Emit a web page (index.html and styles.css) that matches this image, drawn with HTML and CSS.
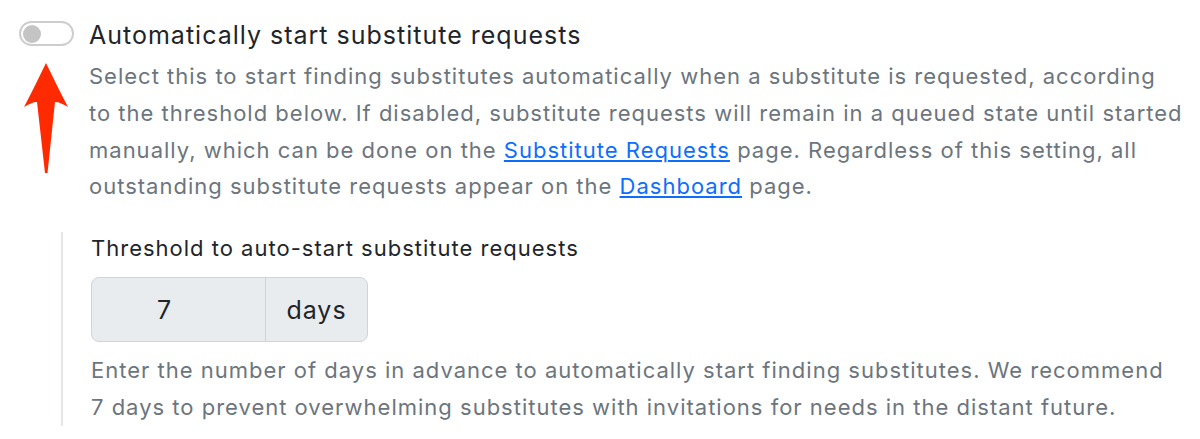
FILE: index.html
```html
<!DOCTYPE html>
<html lang="en">
<head>
<meta charset="utf-8">
<title>Substitute settings</title>
<link rel="stylesheet" href="styles.css">
</head>
<body>
<div class="page">
  <div class="setting">
    <div class="switch-col">
      <span class="switch"><span class="knob"></span></span>
      <svg class="arrow" width="89" height="130" viewBox="0 0 89 130" aria-hidden="true">
        <path d="M46 8 C53 22 60 37 68 52 C63 49 59 47 55 47 L47.5 118 L45 118 L37 47 C33 47 29 49 24 52 C32 37 39 22 46 8 Z" fill="#ff2a00"/>
      </svg>
    </div>
    <div class="content">
      <div class="title">Automatically start substitute requests</div>
      <p class="desc">Select this to start finding substitutes automatically when a substitute is requested, according to the threshold below. If disabled, substitute requests will remain in a queued state until started manually, which can be done on the <a href="#">Substitute Requests</a> page. Regardless of this setting, all outstanding substitute requests appear on the <a href="#">Dashboard</a> page.</p>
    </div>
  </div>
  <div class="sub">
    <div class="label">Threshold to auto-start substitute requests</div>
    <div class="input-group">
      <div class="input">7</div>
      <div class="addon">days</div>
    </div>
    <p class="help">Enter the number of days in advance to automatically start finding substitutes. We recommend 7 days to prevent overwhelming substitutes with invitations for needs in the distant future.</p>
  </div>
</div>
</body>
</html>
```
FILE: styles.css
```css
html, body {
  margin: 0;
  padding: 0;
  background: #ffffff;
}
body {
  font-family: Inter, "Noto Sans", "Liberation Sans", sans-serif;
  color: #212529;
}
.page {
  width: 1200px;
}
.setting {
  display: flex;
}
.switch-col {
  width: 89px;
  flex: none;
  display: flex;
  flex-direction: column;
}
.switch {
  margin: 21px 0 0 19px;
  width: 55px;
  height: 25px;
  box-sizing: border-box;
  border: 2px solid #cdcdcd;
  border-radius: 13px;
  background: #fff;
  display: flex;
  align-items: center;
  padding-left: 2px;
}
.knob {
  width: 18px;
  height: 18px;
  border-radius: 50%;
  background: #c4c4c4;
}
.arrow {
  display: block;
  margin-top: 9px;
}
.content {
  padding-top: 17px;
  flex: 1;
  min-width: 0;
}
.title {
  font-size: 25px;
  letter-spacing: 1px;
  line-height: 36px;
  color: #212529;
}
.desc {
  margin: 5px 0 0;
  font-size: 22px;
  letter-spacing: 1px;
  line-height: 36.75px;
  color: #6c757d;
  width: 1094px;
}
.desc a {
  color: #0d6efd;
  text-decoration: underline;
}
.sub {
  margin: 27px 0 0 61px;
  border-left: 2px solid #e4e6e9;
  padding-left: 28px;
  height: 194px;
}
.label {
  font-size: 22px;
  letter-spacing: 1px;
  line-height: 32px;
  color: #212529;
}
.input-group {
  margin-top: 13px;
  display: flex;
  width: 277px;
  height: 65px;
  box-sizing: border-box;
  border: 1.5px solid #ced4da;
  border-radius: 8px;
  background: #e9ecef;
  font-size: 25px;
  letter-spacing: 1px;
  color: #212529;
}
.input {
  width: 174px;
  box-sizing: border-box;
  padding-right: 28px;
  display: flex;
  align-items: center;
  justify-content: center;
  border-right: 1.5px solid #ced4da;
}
.addon {
  flex: 1;
  display: flex;
  align-items: center;
  justify-content: center;
}
.help {
  margin: 9.5px 0 0;
  font-size: 22px;
  letter-spacing: 1px;
  line-height: 37px;
  color: #6c757d;
  width: 1091px;
}
```
